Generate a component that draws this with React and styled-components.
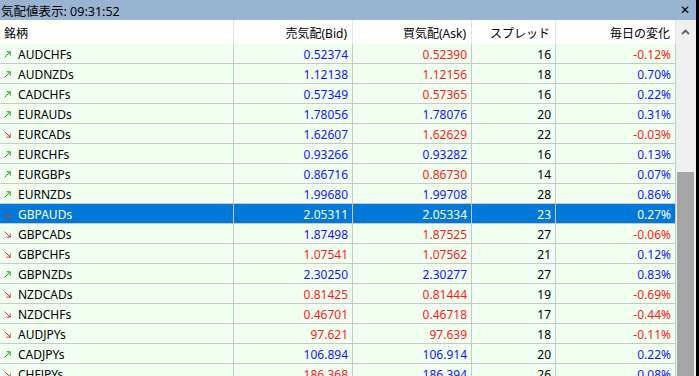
import React from "react";
import styled, { createGlobalStyle } from "styled-components";

const Global = createGlobalStyle`
  html, body { margin: 0; padding: 0; background: #ffffff; overflow: hidden; }
  * { box-sizing: border-box; }
`;

const Window = styled.div`
  width: 699px;
  height: 376px;
  overflow: hidden;
  display: flex;
  flex-direction: column;
  border-right: 3px solid #000;
  font-family: "Noto Sans", "Noto Sans CJK JP", sans-serif;
  font-size: 12px;
  color: #000;
`;

const TitleBar = styled.div`
  height: 20px;
  flex: none;
  background: #99b4d1;
  display: flex;
  align-items: center;
  justify-content: space-between;
  padding: 0 6px 0 1px;
  font-size: 12.5px;
`;

const Close = styled.span`
  font-family: "DejaVu Sans", sans-serif;
  font-weight: bold;
  font-size: 12px;
  line-height: 1;
`;

const Body = styled.div`
  flex: 1;
  display: flex;
  min-height: 0;
`;

const Table = styled.div`
  width: 676px;
  flex: none;
  display: grid;
  grid-template-columns: 234px 119px 119px 84px 120px;
  grid-auto-rows: 20px;
  grid-template-rows: 24px;
  align-content: start;
`;

const HeadCell = styled.div`
  background: #fff;
  border-right: 1px solid #e5e5e5;
  display: flex;
  align-items: center;
  justify-content: ${(p) => (p.$left ? "flex-start" : "flex-end")};
  padding: 1px 5px 0 4px;
  white-space: nowrap;
`;

const Cell = styled.div`
  background: ${(p) => (p.$sel ? "#0078d7" : "#f0fff0")};
  color: ${(p) => (p.$sel ? "#fff" : p.$c)};
  border-right: 1px solid #c8c8c8;
  border-bottom: 1px solid #c8c8c8;
  display: flex;
  align-items: center;
  justify-content: ${(p) => (p.$left ? "flex-start" : "flex-end")};
  padding: 1px 4px 0 4px;
  white-space: nowrap;
`;

const Arrow = styled.svg`
  width: 7px;
  height: 7px;
  margin-right: 7px;
  flex: none;
`;

const Scroll = styled.div`
  width: 20px;
  flex: none;
  background: #f0f0f0;
  display: flex;
  flex-direction: column;
  align-items: center;
  padding: 0 2px 0 1px;
`;

const UpBtn = styled.div`
  height: 20px;
  display: flex;
  align-items: center;
  justify-content: center;
  margin-top: 2px;
`;

const Track = styled.div`
  flex: 1;
  width: 100%;
  padding-top: 130px;
  display: flex;
`;

const Thumb = styled.div`
  flex: 1;
  background: #a6a6a6;
`;

const BLUE = "#1414ff";
const RED = "#ff1a1a";
const BLK = "#000";

const rows = [
  ["AUDCHFs", 1, "0.52374", "b", "0.52390", "r", "16", "-0.12%"],
  ["AUDNZDs", 1, "1.12138", "b", "1.12156", "r", "18", "0.70%"],
  ["CADCHFs", 1, "0.57349", "b", "0.57365", "r", "16", "0.22%"],
  ["EURAUDs", 1, "1.78056", "b", "1.78076", "b", "20", "0.31%"],
  ["EURCADs", 0, "1.62607", "b", "1.62629", "r", "22", "-0.03%"],
  ["EURCHFs", 1, "0.93266", "b", "0.93282", "b", "16", "0.13%"],
  ["EURGBPs", 1, "0.86716", "b", "0.86730", "r", "14", "0.07%"],
  ["EURNZDs", 1, "1.99680", "b", "1.99708", "b", "28", "0.86%"],
  ["GBPAUDs", 0, "2.05311", "b", "2.05334", "b", "23", "0.27%", true],
  ["GBPCADs", 0, "1.87498", "b", "1.87525", "r", "27", "-0.06%"],
  ["GBPCHFs", 0, "1.07541", "r", "1.07562", "r", "21", "0.12%"],
  ["GBPNZDs", 1, "2.30250", "b", "2.30277", "b", "27", "0.83%"],
  ["NZDCADs", 0, "0.81425", "r", "0.81444", "r", "19", "-0.69%"],
  ["NZDCHFs", 0, "0.46701", "r", "0.46718", "r", "17", "-0.44%"],
  ["AUDJPYs", 0, "97.621", "r", "97.639", "r", "18", "-0.11%"],
  ["CADJPYs", 1, "106.894", "b", "106.914", "b", "20", "0.22%"],
  ["CHFJPYs", 0, "186.368", "r", "186.394", "b", "26", "0.08%"],
];

const col = (k) => (k === "b" ? BLUE : RED);

function Dir({ up }) {
  const c = up ? "#1e9a1e" : "#e03030";
  return (
    <Arrow viewBox="0 0 7 7">
      {up ? (
        <path d="M0.5 6.5 L6.2 0.8 M2.5 0.8 H6.2 V4.5" stroke={c} strokeWidth="1" fill="none" />
      ) : (
        <path d="M0.5 0.5 L6.2 6.2 M2.5 6.2 H6.2 V2.5" stroke={c} strokeWidth="1" fill="none" />
      )}
    </Arrow>
  );
}

export default function App() {
  return (
    <>
      <Global />
      <Window>
        <TitleBar>
          <span>気配値表示: 09:31:52</span>
          <Close>✕</Close>
        </TitleBar>
        <Body>
          <Table>
            <HeadCell $left>銘柄</HeadCell>
            <HeadCell>売気配(Bid)</HeadCell>
            <HeadCell>買気配(Ask)</HeadCell>
            <HeadCell>スプレッド</HeadCell>
            <HeadCell>毎日の変化</HeadCell>
            {rows.map((r) => {
              const sel = !!r[8];
              const neg = r[7].startsWith("-");
              return (
                <React.Fragment key={r[0]}>
                  <Cell $left $sel={sel} $c={BLK}>
                    <Dir up={!!r[1]} />
                    {r[0]}
                  </Cell>
                  <Cell $sel={sel} $c={col(r[3])}>{r[2]}</Cell>
                  <Cell $sel={sel} $c={col(r[5])}>{r[4]}</Cell>
                  <Cell $sel={sel} $c={BLK}>{r[6]}</Cell>
                  <Cell $sel={sel} $c={neg ? RED : BLUE}>{r[7]}</Cell>
                </React.Fragment>
              );
            })}
          </Table>
          <Scroll>
            <UpBtn>
              <svg width="9" height="6" viewBox="0 0 9 6">
                <path d="M1 5 L4.5 1.5 L8 5" stroke="#606060" strokeWidth="1.8" fill="none" />
              </svg>
            </UpBtn>
            <Track>
              <Thumb />
            </Track>
          </Scroll>
        </Body>
      </Window>
    </>
  );
}
